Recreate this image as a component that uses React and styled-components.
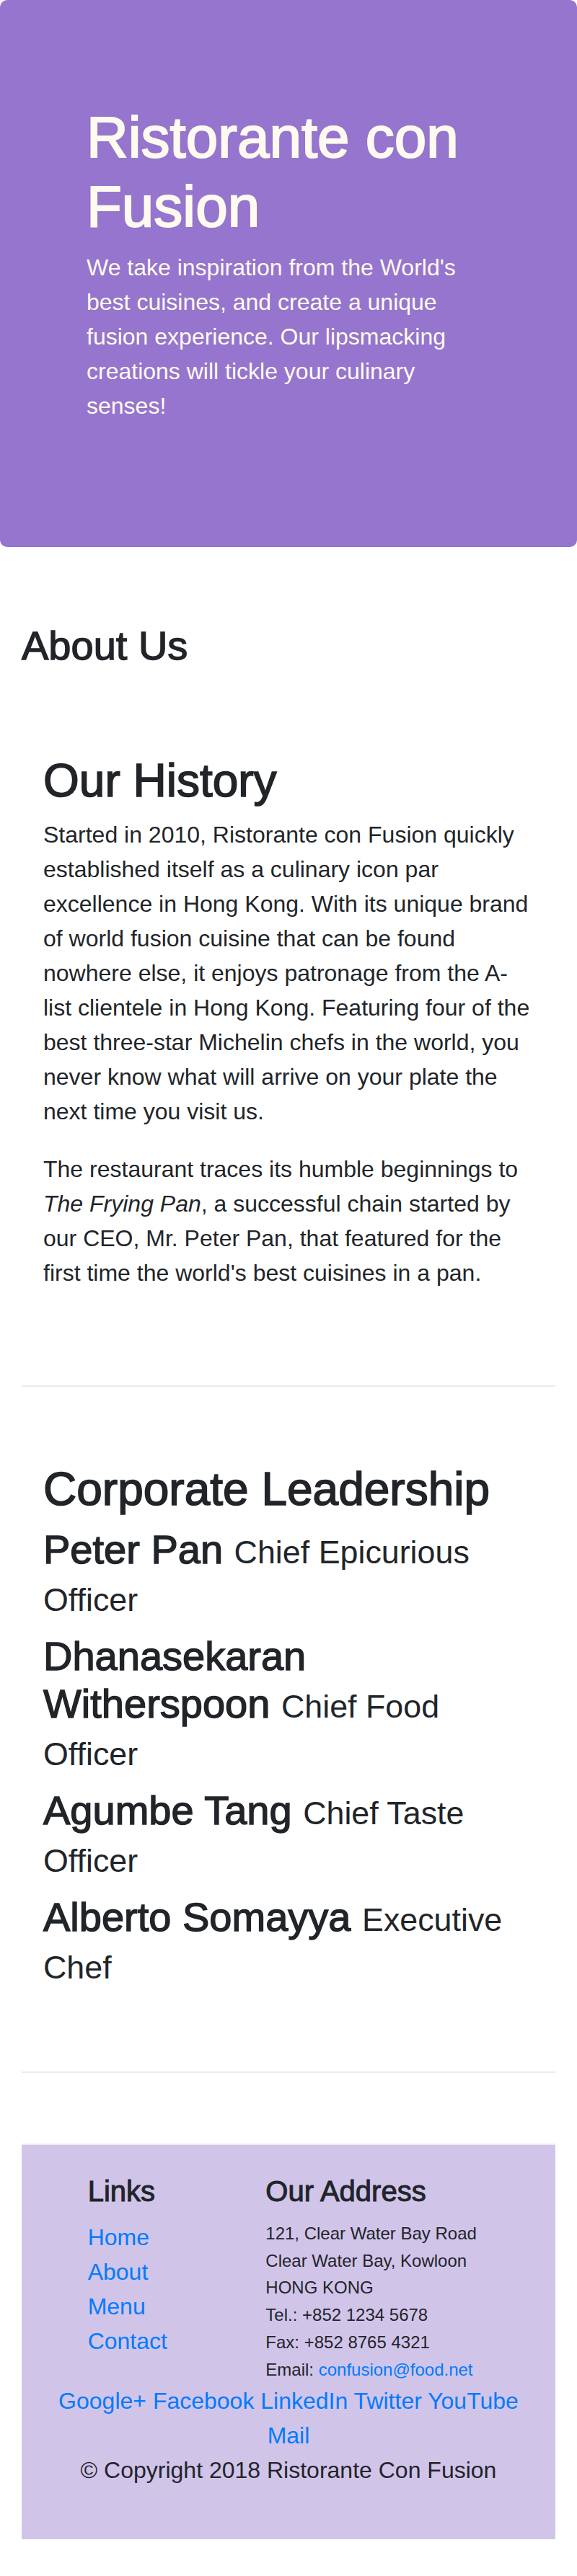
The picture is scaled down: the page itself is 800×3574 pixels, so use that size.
import React from "react";
import styled, { createGlobalStyle } from "styled-components";

const GlobalStyle = createGlobalStyle`
  html, body {
    margin: 0;
    padding: 0;
  }
  body {
    font-family: "Liberation Sans", Arial, sans-serif;
    font-size: 32px;
    line-height: 1.5;
    color: #212529;
    background: #fff;
  }
  *, *::before, *::after {
    box-sizing: border-box;
  }
`;

const semibold = `
  font-weight: 400;
  -webkit-text-stroke: 0.025em currentColor;
`;

const Jumbotron = styled.header`
  background: #9575cd;
  color: #fffaf0;
  border-radius: 10px;
  padding: 143px 120px 140px;
  margin-bottom: 103px;
`;

const Title = styled.h1`
  margin: 0 0 12px;
  font-size: 80px;
  line-height: 1.2;
  ${semibold}
`;

const Text = styled.p`
  margin: 0 0 32px;
`;

const Container = styled.main`
  padding: 0 30px;
`;

const PageTitle = styled.h3`
  margin: 0 0 12px;
  font-size: 56px;
  line-height: 1.2;
  ${semibold}
`;

const Section = styled.section`
  padding: ${(p) => p.$top}px 30px ${(p) => p.$bottom}px;
  border-bottom: 2px solid #ececec;
`;

const SectionTitle = styled.h2`
  margin: 0 0 12px;
  font-size: 64px;
  line-height: 1.2;
  ${semibold}
`;

const Leader = styled.h3`
  margin: 0 0 16px;
  font-size: 56px;
  line-height: 66px;
  font-weight: 400;
`;

const LeaderName = styled.span`
  -webkit-text-stroke: 0.025em currentColor;
`;

const Role = styled.small`
  font-size: 80%;
  font-weight: 400;
  line-height: 1;
`;

const Footer = styled.footer`
  background: #d1c4e9;
  padding: 40px 0;
`;

const FooterGrid = styled.div`
  display: grid;
  grid-template-columns: repeat(12, 1fr);
`;

const FooterCol = styled.div`
  grid-column: ${(p) => p.$area};
  padding: 0 30px;
  text-align: ${(p) => (p.$center ? "center" : "left")};
`;

const FooterTitle = styled.h5`
  margin: 0 0 16px;
  font-size: 40px;
  line-height: 1.2;
  ${semibold}
`;

const LinkList = styled.ul`
  list-style: none;
  margin: 0 0 32px;
  padding: 0;
`;

const Link = styled.a`
  color: #007bff;
  text-decoration: none;
`;

const Address = styled.address`
  margin: 0;
  font-style: normal;
  font-size: 24px;
  line-height: 37.8px;
`;

const Copyright = styled.p`
  margin: 0 0 32px;
`;

const leaders = [
  { name: "Peter Pan", role: "Chief Epicurious Officer" },
  { name: "Dhanasekaran Witherspoon", role: "Chief Food Officer" },
  { name: "Agumbe Tang", role: "Chief Taste Officer" },
  { name: "Alberto Somayya", role: "Executive Chef" },
];

const socials = ["Google+", "Facebook", "LinkedIn", "Twitter", "YouTube", "Mail"];

export default function App() {
  return (
    <>
      <GlobalStyle />
      <Jumbotron>
        <Title>Ristorante con Fusion</Title>
        <Text>
          We take inspiration from the World's best cuisines, and create a
          unique fusion experience. Our lipsmacking creations will tickle your
          culinary senses!
        </Text>
      </Jumbotron>

      <Container>
        <PageTitle>About Us</PageTitle>

        <Section $top={104} $bottom={100}>
          <SectionTitle>Our History</SectionTitle>
          <Text>
            Started in 2010, Ristorante con Fusion quickly established itself
            as a culinary icon par excellence in Hong Kong. With its unique
            brand of world fusion cuisine that can be found nowhere else, it
            enjoys patronage from the A-list clientele in Hong Kong. Featuring
            four of the best three-star Michelin chefs in the world, you never
            know what will arrive on your plate the next time you visit us.
          </Text>
          <Text>
            The restaurant traces its humble beginnings to{" "}
            <em>The Frying Pan</em>, a successful chain started by our CEO, Mr.
            Peter Pan, that featured for the first time the world's best
            cuisines in a pan.
          </Text>
        </Section>

        <Section $top={104} $bottom={99}>
          <SectionTitle>Corporate Leadership</SectionTitle>
          {leaders.map((l) => (
            <Leader key={l.name}>
              <LeaderName>{l.name}</LeaderName> <Role>{l.role}</Role>
            </Leader>
          ))}
        </Section>

        <Section $top={49} $bottom={49} />

        <Footer>
          <FooterGrid>
            <FooterCol $area="2 / span 4">
              <FooterTitle>Links</FooterTitle>
              <LinkList>
                <li><Link href="#">Home</Link></li>
                <li><Link href="#">About</Link></li>
                <li><Link href="#">Menu</Link></li>
                <li><Link href="#">Contact</Link></li>
              </LinkList>
            </FooterCol>
            <FooterCol $area="span 7">
              <FooterTitle>Our Address</FooterTitle>
              <Address>
                121, Clear Water Bay Road<br />
                Clear Water Bay, Kowloon<br />
                HONG KONG<br />
                Tel.: +852 1234 5678<br />
                Fax: +852 8765 4321<br />
                Email: <Link href="#">confusion@food.net</Link>
              </Address>
            </FooterCol>
            <FooterCol $area="1 / -1" $center>
              {socials.map((s, i) => (
                <React.Fragment key={s}>
                  {i > 0 && " "}
                  <Link href="#">{s}</Link>
                </React.Fragment>
              ))}
            </FooterCol>
            <FooterCol $area="1 / -1" $center>
              <Copyright>© Copyright 2018 Ristorante Con Fusion</Copyright>
            </FooterCol>
          </FooterGrid>
        </Footer>
      </Container>
    </>
  );
}
